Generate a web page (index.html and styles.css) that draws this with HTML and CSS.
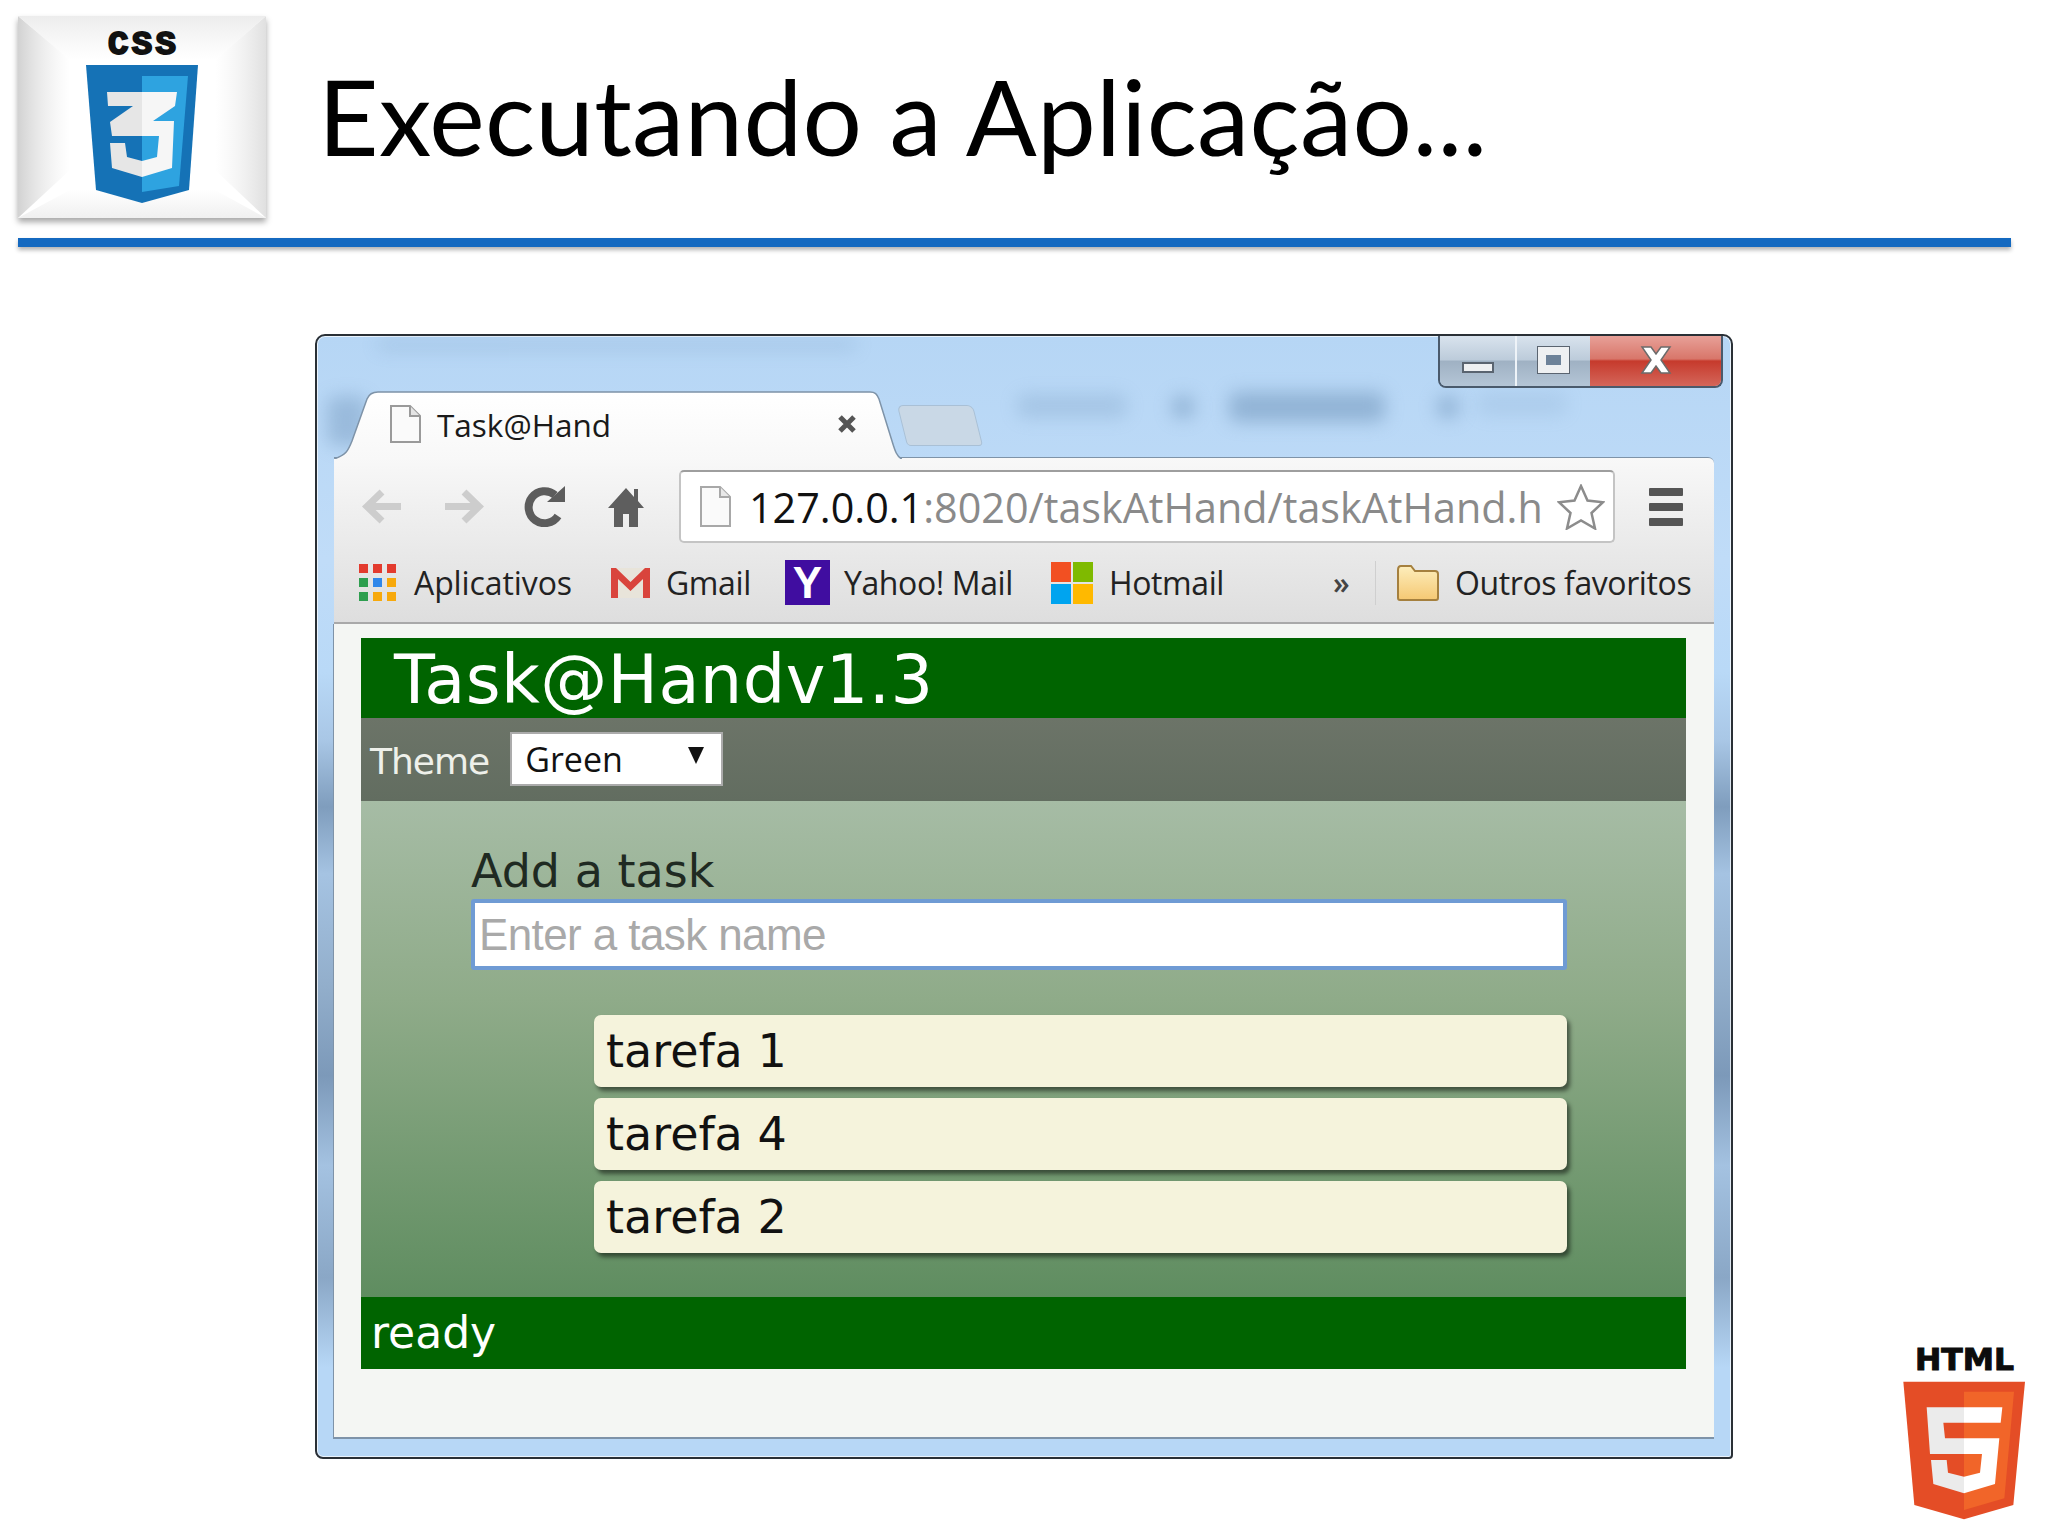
FILE: index.html
```html
<!DOCTYPE html>
<html lang="pt">
<head>
<meta charset="UTF-8">
<title>Executando a Aplicação...</title>
<link rel="stylesheet" href="styles.css">
</head>
<body>

<div class="slide">
    <header class="slide-head">
        <div class="css-logo">
            <svg width="248" height="202" viewBox="18 16 248 202">
                <defs>
                    <linearGradient id="foldL" x1="0" x2="1" y1="0" y2="0"><stop offset="0" stop-color="#d2d2d2"/><stop offset="1" stop-color="#e8e8e8" stop-opacity="0"/></linearGradient>
                    <linearGradient id="foldR" x1="1" x2="0" y1="0" y2="0"><stop offset="0" stop-color="#e0e0e0"/><stop offset="1" stop-color="#eeeeee" stop-opacity="0"/></linearGradient>
                    <linearGradient id="foldT" x1="0" x2="0" y1="0" y2="1"><stop offset="0" stop-color="#ececec"/><stop offset="1" stop-color="#f0f0f0" stop-opacity="0"/></linearGradient>
                    <linearGradient id="foldB" x1="0" x2="0" y1="1" y2="0"><stop offset="0" stop-color="#f0f0f0"/><stop offset="1" stop-color="#f0f0f0" stop-opacity="0"/></linearGradient>
                    <linearGradient id="three" gradientUnits="userSpaceOnUse" x1="107" x2="177" y1="0" y2="0"><stop offset="0.5" stop-color="#e6e6e6"/><stop offset="0.5" stop-color="#f6f6f6"/></linearGradient>
                </defs>
                <polygon points="18,16 70,60 70,170 18,218" fill="url(#foldL)"/>
                <polygon points="266,16 215,60 215,170 266,218" fill="url(#foldR)"/>
                <polygon points="18,16 266,16 215,60 70,60" fill="url(#foldT)"/>
                <polygon points="18,218 266,218 215,190 70,190" fill="url(#foldB)"/>
                <text class="logo-word" x="108" y="54" textLength="68" lengthAdjust="spacing">CSS</text>
                <polygon points="86,65 198,65 189,190 142,203 96,190" fill="#1572b6"/>
                <polygon points="142,76 188,76 179,186 142,192" fill="#2ea3e0"/>
                <polygon points="107,92 177,92 175,106 153,121 174,121 172,168 142,177 112,168 110,143 125,143 127,157 142,161 157,157 159,136 112,136 110,122 133,106 108,106" fill="url(#three)"/>
            </svg>
        </div>
        <h1 class="slide-title">Executando a Aplicação...</h1>
    </header>
    <div class="slide-rule"></div>

    <div class="browser">
        <div class="smear smear-top"></div>
        <div class="smear smear-a"></div>
        <div class="smear smear-b"></div>
        <div class="smear smear-c"></div>
        <div class="smear smear-d"></div>
        <div class="smear smear-e"></div>
        <div class="smear smear-f"></div>

        <div class="win-controls">
            <div class="win-btn win-min"><span class="min-glyph"></span></div>
            <div class="win-btn win-max"><span class="max-glyph"></span></div>
            <div class="win-btn win-close">
                <svg width="34" height="28" viewBox="0 0 34 28"><path d="M3 1h9l5 7 5-7h9l-9 13 9 13h-9l-5-7-5 7H3l9-13z" fill="#fff" stroke="#6b6b6b" stroke-width="1.5"/></svg>
            </div>
        </div>

        <div class="tab-strip">
            <div class="tab">
                <svg class="tab-shape" width="568" height="68" viewBox="0 0 568 68"><defs><linearGradient id="tabFill" x1="0" x2="0" y1="0" y2="1"><stop offset="0" stop-color="#fff"/><stop offset="1" stop-color="#f8f8f8"/></linearGradient></defs><path d="M0 68C12 64 14 60 18 50L33 8C35 3 38 1 44 1H536C541 1 543 3 545 8L558 50C561 60 563 66 568 68" fill="url(#tabFill)" stroke="#7e93a8" stroke-width="1.5"/></svg>
                <svg class="doc-icon" width="31" height="38" viewBox="0 0 31 38"><path d="M1 1h19l10 10v26H1z" fill="#fafafa" stroke="#9a9a9a" stroke-width="2"/><path d="M20 1v10h10" fill="#e4e4e4" stroke="#9a9a9a" stroke-width="2"/></svg>
                <span class="tab-title">Task@Hand</span>
                <svg class="tab-close" width="20" height="20" viewBox="0 0 20 20"><path d="M3 3l14 14M17 3L3 17" stroke="#555" stroke-width="5"/></svg>
            </div>
            <div class="new-tab"></div>
        </div>

        <div class="chrome">
            <div class="toolbar">
                <svg class="tool" width="41" height="35" viewBox="0 0 41 35"><path d="M39 17.5H8M20 3L5 17.5 20 32" fill="none" stroke="#cdcdcd" stroke-width="7"/></svg>
                <svg class="tool" width="41" height="35" viewBox="0 0 41 35"><path d="M2 17.5h31M21 3l15 14.5L21 32" fill="none" stroke="#cdcdcd" stroke-width="7"/></svg>
                <svg class="tool" width="42" height="41" viewBox="0 0 42 41"><path d="M34 30A16 16 0 1 1 31 9" fill="none" stroke="#5c5c5c" stroke-width="8"/><polygon points="23,16 41,16 41,0" fill="#5c5c5c"/></svg>
                <svg class="tool" width="36" height="40" viewBox="0 0 36 40"><path d="M18 1L0 21h6v19h9V27h6v13h9V21h6l-6-7V2h-4v8z" fill="#5e5e5e"/></svg>
                <div class="omnibox">
                    <svg width="31" height="41" viewBox="0 0 31 41"><path d="M1 1h19l10 10v29H1z" fill="#fafafa" stroke="#a8a8a8" stroke-width="2"/><path d="M20 1v10h10" fill="#e8e8e8" stroke="#a8a8a8" stroke-width="2"/></svg>
                    <div class="url"><span class="url-host">127.0.0.1</span>:8020/taskAtHand/taskAtHand.h</div>
                    <svg width="48" height="46" viewBox="0 0 48 46"><path d="M24 2l6.500 14.500L46 18.200l-11.500 10.800L38 44.500 24 36.500 10 44.500 13.500 29 2 18.200l15.500-1.700z" fill="#fff" stroke="#8c8c8c" stroke-width="2.500"/></svg>
                </div>
                <div class="menu-btn"><span></span><span></span><span></span></div>
            </div>

            <div class="bookmarks">
                <div class="mark mark-apps">
                    <div class="apps-grid">
                        <i class="dot-r"></i><i class="dot-r"></i><i class="dot-r"></i>
                        <i class="dot-g"></i><i class="dot-b"></i><i class="dot-o"></i>
                        <i class="dot-g"></i><i class="dot-o"></i><i class="dot-o"></i>
                    </div>
                    <span>Aplicativos</span>
                </div>
                <div class="mark mark-gmail">
                    <svg width="39" height="30" viewBox="0 0 39 30"><rect x="0" y="0" width="39" height="30" fill="#e8e4da"/><path d="M0 30V0h5l14.500 14L34 0h5v30h-7V11L19.500 23 7 11v19z" fill="#d9443c"/></svg>
                    <span>Gmail</span>
                </div>
                <div class="mark mark-yahoo">
                    <div class="yahoo-box">Y</div>
                    <span>Yahoo! Mail</span>
                </div>
                <div class="mark mark-hotmail">
                    <div class="ms-grid"><i class="ms-r"></i><i class="ms-g"></i><i class="ms-b"></i><i class="ms-y"></i></div>
                    <span>Hotmail</span>
                </div>
                <span class="more">»</span>
                <div class="mark-sep"></div>
                <div class="mark mark-other">
                    <svg width="42" height="36" viewBox="0 0 42 36"><defs><linearGradient id="folderFill" x1="0" x2="0" y1="0" y2="1"><stop offset="0" stop-color="#fdeebc"/><stop offset="1" stop-color="#f5c873"/></linearGradient></defs><path d="M1 5c0-2 1-4 3-4h10l4 5h20c2 0 3 1 3 3v24c0 1-1 2-2 2H3c-1 0-2-1-2-2z" fill="url(#folderFill)" stroke="#a5803e" stroke-width="2"/></svg>
                    <span>Outros favoritos</span>
                </div>
            </div>
        </div>

        <div class="page-area">
            <div id="app">
                <header class="app-header">Task@Handv1.3</header>
                <div class="app-options">
                    <label class="theme-label">Theme</label>
                    <div class="theme-select"><span>Green</span><span class="select-arrow"></span></div>
                </div>
                <div class="app-main">
                    <div class="add-label">Add a task</div>
                    <input class="task-input" type="text" placeholder="Enter a task name">
                    <ol class="task-list">
                        <li>tarefa 1</li>
                        <li>tarefa 4</li>
                        <li>tarefa 2</li>
                    </ol>
                </div>
                <footer class="app-footer">ready</footer>
            </div>
        </div>
    </div>

    <div class="html-logo">
        <svg width="168" height="206" viewBox="0 0 504 618">
            <defs><linearGradient id="five" gradientUnits="userSpaceOnUse" x1="140" x2="365" y1="0" y2="0"><stop offset="0.5" stop-color="#ebebeb"/><stop offset="0.5" stop-color="#fff"/></linearGradient></defs>
            <text class="html-word" x="105" y="120" textLength="297" lengthAdjust="spacingAndGlyphs">HTML</text>
            <polygon points="70,155 435,155 400,525 252,568 103,525" fill="#e44d26"/>
            <polygon points="252,185 402,185 373,505 252,540" fill="#f16529"/>
            <polygon points="140,232 367,232 362,278 190,278 195,325 358,325 345,462 252,490 160,462 153,390 200,390 204,428 252,440 300,428 306,372 150,372" fill="url(#five)"/>
        </svg>
    </div>
</div>

</body>
</html>
```

FILE: styles.css
```css
* {
  box-sizing: border-box;
}

body {
  margin: 0;
  background: #fff;
  font-family: "Open Sans", sans-serif;
}

.slide {
  position: relative;
  width: 2048px;
  height: 1536px;
  overflow: hidden;
  background: #fff;
}

/* slide header */
.slide-head {
  display: flex;
  align-items: center;
  padding: 16px 0 0 18px;
}

.css-logo {
  width: 248px;
  height: 202px;
  background: #fff;
  box-shadow: 0 4px 6px rgba(0,0,0,0.35);
}

.css-logo svg {
  display: block;
}

.logo-word {
  font-family: "Liberation Mono", monospace;
  font-weight: bold;
  font-size: 34px;
  fill: #111;
  stroke: #111;
  stroke-width: 2px;
}

.html-word {
  font-family: "DejaVu Sans", sans-serif;
  font-weight: bold;
  font-size: 90px;
  fill: #0c0c0c;
  stroke: #0c0c0c;
  stroke-width: 3px;
}

.slide-title {
  margin: -4px 0 0 52px;
  font-family: Lato, sans-serif;
  font-weight: 400;
  font-size: 105px;
  line-height: 120px;
  letter-spacing: 0.3px;
  font-variant-ligatures: none;
  color: #000;
}

.slide-rule {
  height: 9px;
  margin: 20px 37px 0 18px;
  background: #1469c0;
  box-shadow: 0 3px 4px rgba(0,0,0,0.3);
}

/* browser window */
.browser {
  position: relative;
  display: flex;
  flex-direction: column;
  width: 1418px;
  height: 1125px;
  margin: 87px 0 0 315px;
  padding: 0 17px 18px 17px;
  background: linear-gradient(180deg, #b6d6f5, #c0dcf8 20%, #b9d9f7 30%, #a9c7e6 36%, #7f9dbd 42%, #a5c3e2 48%, #92aecb 58%, #7c99b9 66%, #a4c2e1 74%, #8aa7c6 84%, #b7d7f6 92%);
  border: 2px solid #2a3036;
  border-radius: 10px 10px 4px 8px;
  box-shadow: inset 0 0 0 1px rgba(255,255,255,0.7);
  overflow: hidden;
}

.smear {
  position: absolute;
  background: #6a8fb5;
  filter: blur(9px);
  opacity: 0.5;
  border-radius: 8px;
}

.smear-top { left: 60px; top: 4px; width: 480px; height: 10px; opacity: 0.25; }
.smear-a { left: 700px; top: 58px; width: 110px; height: 24px; opacity: 0.25; }
.smear-b { left: 855px; top: 60px; width: 22px; height: 22px; }
.smear-c { left: 912px; top: 56px; width: 156px; height: 30px; }
.smear-d { left: 1120px; top: 60px; width: 22px; height: 22px; }
.smear-e { left: 1160px; top: 56px; width: 90px; height: 24px; opacity: 0.15; }
.smear-f { left: 10px; top: 60px; width: 40px; height: 50px; opacity: 0.4; }

.win-controls {
  position: absolute;
  top: -2px;
  right: 8px;
  display: flex;
  height: 54px;
  border: 2px solid #4a5a6c;
  border-top: none;
  border-radius: 0 0 8px 8px;
  overflow: hidden;
  z-index: 2;
}

.win-btn {
  display: flex;
  justify-content: center;
  align-items: center;
  height: 100%;
  background: linear-gradient(180deg, #dbe5ef, #bccbda 50%, #9fb1c3 52%, #b4c5d6);
}

.win-min {
  width: 77px;
  padding-top: 14px;
  border-right: 2px solid #eef3f8;
}

.win-max {
  width: 73px;
}

.win-close {
  width: 131px;
  background: linear-gradient(180deg, #e9a49c, #d8766a 48%, #c63a2c 52%, #d4665a);
}

.min-glyph {
  width: 32px;
  height: 11px;
  background: #eef0f2;
  border: 2px solid #5a6470;
}

.max-glyph {
  width: 31px;
  height: 26px;
  border: 3px solid #eef0f2;
  outline: 1px solid #5a6470;
  background: #6d8299;
  box-shadow: inset 0 0 0 5px #eef0f2;
}

.tab-strip {
  display: flex;
  align-items: flex-end;
  height: 121px;
  flex-shrink: 0;
  position: relative;
}

.tab {
  position: relative;
  display: flex;
  align-items: center;
  width: 568px;
  height: 68px;
  padding: 0 0 2px 56px;
  margin-bottom: -2px;
  z-index: 1;
}

.tab-shape {
  position: absolute;
  left: 0;
  top: 0;
}

.doc-icon {
  position: relative;
}

.tab-title {
  position: relative;
  margin-left: 16px;
  font-size: 31.5px;
  color: #1a1a1a;
}

.tab-close {
  position: relative;
  margin-left: 226px;
}

.new-tab {
  width: 76px;
  height: 41px;
  margin: 0 0 11px 0;
  background: #c9d8e6;
  border: 1px solid #a9c0d6;
  border-radius: 6px 6px 4px 4px;
  transform: skewX(14deg);
}

.chrome {
  position: relative;
  flex-shrink: 0;
  height: 167px;
  background: linear-gradient(180deg, #f8f8f8, #ececec 45%, #dedede);
  border-top: 1px solid #7e93a8;
  border-bottom: 2px solid #a9a9a9;
  border-radius: 0 6px 0 0;
}

.toolbar {
  display: flex;
  align-items: center;
  height: 97px;
  padding: 0 31px 0 28px;
}

.tool {
  flex-shrink: 0;
  margin-right: 40px;
}

.tool:nth-child(3) {
  margin-right: 42px;
}

.tool:nth-child(4) {
  margin-right: 35px;
}

.omnibox {
  display: flex;
  align-items: center;
  width: 936px;
  height: 73px;
  padding: 0 8px 0 19px;
  background: #fff;
  border: 2px solid #c4c4c4;
  border-top-color: #9e9e9e;
  border-radius: 5px;
}

.omnibox svg {
  flex-shrink: 0;
}

.url {
  flex: 1;
  margin-left: 18px;
  white-space: nowrap;
  font-size: 41.3px;
  line-height: 50px;
  color: #8a8a8a;
}

.url-host {
  color: #111;
}

.menu-btn {
  display: flex;
  flex-direction: column;
  gap: 7px;
  margin-left: 34px;
}

.menu-btn span {
  display: block;
  width: 34px;
  height: 8px;
  background: #555;
  border-radius: 1px;
}

.bookmarks {
  display: flex;
  align-items: center;
  height: 65px;
  padding: 0 0 10px 25px;
  font-size: 32px;
  color: #222;
}

.mark {
  display: flex;
  align-items: center;
  gap: 16px;
}

.mark span {
  letter-spacing: -0.4px;
}

.mark-apps { width: 252px; gap: 18px; }
.mark-apps span { letter-spacing: -0.1px; }
.mark-gmail { width: 174px; }
.mark-yahoo { width: 266px; gap: 14px; }
.mark-hotmail { width: 282px; }

.apps-grid {
  display: grid;
  grid-template-columns: repeat(3, 9px);
  grid-auto-rows: 9px;
  gap: 5px;
}

.apps-grid i { display: block; }
.dot-r { background: #e33b2e; }
.dot-g { background: #2e9e4f; }
.dot-b { background: #2f87ea; }
.dot-o { background: #f7a90c; }

.yahoo-box {
  width: 45px;
  height: 45px;
  background: #400da0;
  color: #fff;
  font: bold 44px/45px "Liberation Sans", sans-serif;
  text-align: center;
}

.ms-grid {
  display: grid;
  grid-template-columns: repeat(2, 20px);
  grid-auto-rows: 20px;
  gap: 2px;
}

.ms-grid i { display: block; }
.ms-r { background: #f25022; }
.ms-g { background: #7fba00; }
.ms-b { background: #00a4ef; }
.ms-y { background: #ffb900; }

.more {
  width: 42px;
  font-size: 30px;
  font-weight: 600;
  color: #444;
}

.mark-sep {
  width: 1px;
  height: 44px;
  margin-right: 21px;
  background: #cfcfcf;
}

/* page inside the browser */
.page-area {
  flex: 1;
  padding: 14px 28px 0 27px;
  background: #f4f6f3;
  border-bottom: 2px solid #7e93a8;
  box-shadow: -1px 0 0 #7e93a8;
}

.app-header {
  height: 80px;
  padding-left: 33px;
  background: #006400;
  color: #fff;
  font: 67px/84px "DejaVu Sans", sans-serif;
  letter-spacing: 0.4px;
}

.app-options {
  display: flex;
  align-items: center;
  gap: 21px;
  height: 83px;
  padding: 0 0 2px 9px;
  background: linear-gradient(180deg, #6c7468, #626d60);
}

.theme-label {
  padding-top: 5px;
  font: 36px "DejaVu Sans", sans-serif;
  color: #eef0ea;
  letter-spacing: -1px;
}

.theme-select {
  display: flex;
  align-items: center;
  justify-content: space-between;
  width: 213px;
  height: 54px;
  padding: 0 17px 0 13px;
  background: #fff;
  border: 2px solid #ababab;
  font-size: 34px;
  color: #111;
}

.select-arrow {
  width: 0;
  height: 0;
  border-left: 8px solid transparent;
  border-right: 8px solid transparent;
  border-top: 17px solid #111;
  margin-bottom: 6px;
}

.app-main {
  height: 496px;
  padding: 42px 119px 0 110px;
  background: linear-gradient(180deg, #a6bca5, #8fab89 40%, #5f8d60);
}

.add-label {
  font: 46px/56px "DejaVu Sans", sans-serif;
  color: #1f2a22;
}

.task-input {
  display: block;
  width: 100%;
  height: 71px;
  padding: 0 4px;
  background: #fff;
  border: 4px solid #6f9bd4;
  border-radius: 3px;
  outline: none;
  font: 44px "Liberation Sans", sans-serif;
  letter-spacing: -0.6px;
}

.task-input::placeholder {
  color: #a9a9a9;
}

.task-list {
  display: flex;
  flex-direction: column;
  gap: 11px;
  margin: 45px 0 0 123px;
  padding: 0;
  list-style: none;
}

.task-list li {
  height: 72px;
  padding-left: 12px;
  background: #f5f3dc;
  border-radius: 7px;
  box-shadow: 3px 4px 4px rgba(0,0,0,0.5);
  font: 46px/72px "DejaVu Sans", sans-serif;
  color: #111;
}

.app-footer {
  height: 72px;
  padding-left: 10px;
  background: #006400;
  color: #fff;
  font: 44px/72px "DejaVu Sans", sans-serif;
}

.html-logo {
  position: absolute;
  right: 0;
  bottom: 0;
}

.html-logo svg {
  display: block;
}
```
